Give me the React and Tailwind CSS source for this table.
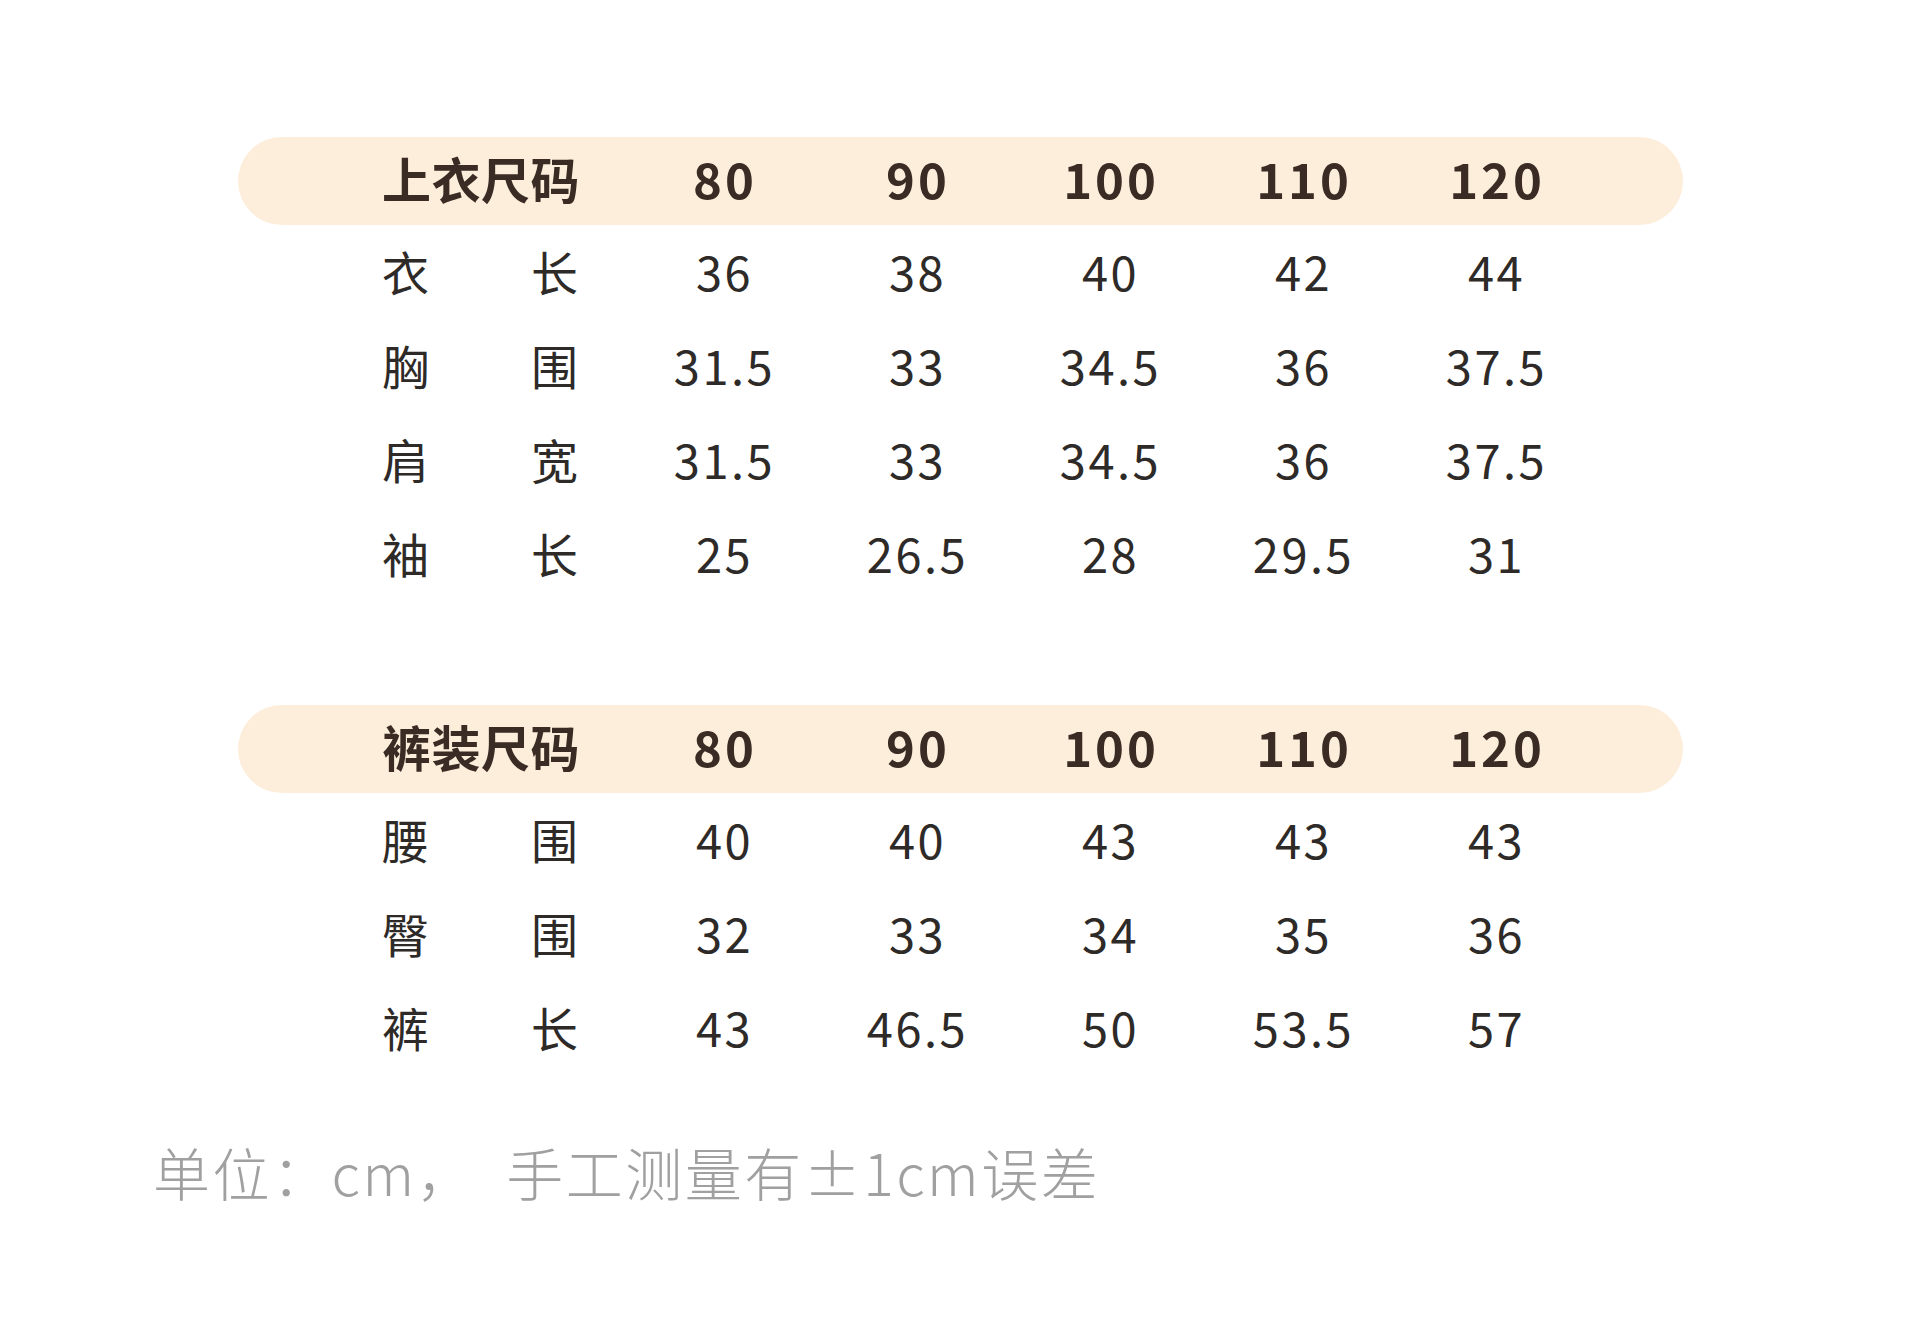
const sizes = ["80", "90", "100", "110", "120"];

const tops = [
  { a: "衣", b: "长", v: ["36", "38", "40", "42", "44"] },
  { a: "胸", b: "围", v: ["31.5", "33", "34.5", "36", "37.5"] },
  { a: "肩", b: "宽", v: ["31.5", "33", "34.5", "36", "37.5"] },
  { a: "袖", b: "长", v: ["25", "26.5", "28", "29.5", "31"] },
];

const pants = [
  { a: "腰", b: "围", v: ["40", "40", "43", "43", "43"] },
  { a: "臀", b: "围", v: ["32", "33", "34", "35", "36"] },
  { a: "裤", b: "长", v: ["43", "46.5", "50", "53.5", "57"] },
];

const SizeTable = ({ title, rows }) => {
  return (
    <div className="w-[1445px] flex flex-col">
      <div className="h-[88px] rounded-full bg-[#fdeedb] pl-[144px] pb-[8px] grid grid-cols-[245px_repeat(5,193px)] items-center text-[#3a2b24] font-bold text-[49px] leading-none">
        <div className="tracking-[0.5px]">{title}</div>
        {sizes.map((s) => (
          <div key={s} className="text-center tracking-[3px] pl-[3px]">
            {s}
          </div>
        ))}
      </div>
      <div className="mt-[-2px] flex flex-col">
        {rows.map((r, i) => (
          <div
            key={i}
            className="h-[94px] pl-[144px] grid grid-cols-[245px_repeat(5,193px)] items-center text-[#2e2a28] text-[47px] leading-none"
          >
            <div className="w-[196px] flex justify-between">
              <span>{r.a}</span>
              <span>{r.b}</span>
            </div>
            {r.v.map((n, j) => (
              <div key={j} className="text-center tracking-[2.5px] pl-[2px]">
                {n}
              </div>
            ))}
          </div>
        ))}
      </div>
    </div>
  );
};

export default function App() {
  return (
    <div
      className="w-[1920px] h-[1324px] bg-white flex flex-col"
      style={{ fontFamily: '"Noto Sans CJK SC", "Noto Sans", sans-serif' }}
    >
      <div className="pt-[137px] pl-[238px]">
        <SizeTable title="上衣尺码" rows={tops} />
      </div>
      <div className="pt-[106px] pl-[238px]">
        <SizeTable title="裤装尺码" rows={pants} />
      </div>
      <div className="pl-[153px] pt-[70px] text-[57px] leading-none font-light tracking-[2.5px] text-[#a0a0a0] whitespace-pre">
        单位：cm，  手工测量有±1cm误差
      </div>
    </div>
  );
}
